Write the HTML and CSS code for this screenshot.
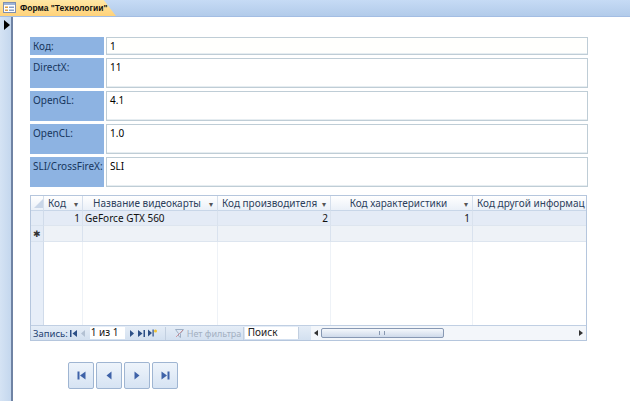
FILE: index.html
```html
<!DOCTYPE html>
<html lang="ru">
<head>
<meta charset="utf-8">
<title>Форма "Технологии"</title>
<link rel="stylesheet" href="styles.css">
</head>
<body>
<div class="tabbar">
  <div class="tab">
    <svg class="tab-icon" width="13" height="11" viewBox="0 0 13 11">
      <rect x="0.5" y="0.5" width="12" height="10" fill="#fff" stroke="#7f8fb0"/>
      <rect x="1" y="1" width="11" height="2" fill="#9db4d8"/>
      <rect x="2" y="4.5" width="3" height="1.5" fill="#e0a040"/>
      <rect x="6" y="4.5" width="5" height="1.5" fill="#8aa0c8"/>
      <rect x="2" y="7.5" width="3" height="1.5" fill="#e0a040"/>
      <rect x="6" y="7.5" width="5" height="1.5" fill="#8aa0c8"/>
    </svg>
    <span class="tab-title">Форма "Технологии"</span>
  </div>
</div>
<div class="main">
  <div class="selector-strip">
    <svg class="current-mark" width="6" height="10" viewBox="0 0 6 10"><path d="M0 0 L6 5 L0 10 Z" fill="#000"/></svg>
  </div>
  <div class="form-body">
    <div class="fields">
      <div class="label">Код:</div><div class="field field-key">1</div>
      <div class="label tall">DirectX:</div><div class="field tall">11</div>
      <div class="label tall">OpenGL:</div><div class="field tall">4.1</div>
      <div class="label tall">OpenCL:</div><div class="field tall">1.0</div>
      <div class="label tall">SLI/CrossFireX:</div><div class="field tall">SLI</div>
    </div>

    <div class="datasheet">
      <div class="grid">
        <div class="hcell corner"><svg width="9" height="9" viewBox="0 0 9 9"><path d="M9 0 L9 9 L0 9 Z" fill="#c9d6e8"/></svg></div>
        <div class="hcell"><span class="htext">Код</span><span class="drop">▾</span></div>
        <div class="hcell"><span class="htext center">Название видеокарты</span><span class="drop">▾</span></div>
        <div class="hcell"><span class="htext">Код производителя</span><span class="drop">▾</span></div>
        <div class="hcell"><span class="htext center">Код характеристики</span><span class="drop">▾</span></div>
        <div class="hcell last"><span class="htext">Код другой информац</span></div>

        <div class="sel"></div>
        <div class="cell num cur">1</div>
        <div class="cell cur">GeForce GTX 560</div>
        <div class="cell num cur">2</div>
        <div class="cell num cur">1</div>
        <div class="cell cur last"></div>

        <div class="sel star">✱</div>
        <div class="cell newrow"></div>
        <div class="cell newrow"></div>
        <div class="cell newrow"></div>
        <div class="cell newrow"></div>
        <div class="cell newrow last"></div>

        <div class="sel fill"></div>
        <div class="cell fill"></div>
        <div class="cell fill"></div>
        <div class="cell fill"></div>
        <div class="cell fill"></div>
        <div class="cell fill last"></div>
      </div>

      <div class="navbar">
        <span class="nav-label">Запись:</span>
        <svg class="nav-ic first" width="7" height="7" viewBox="0 0 7 7"><rect x="0" y="0" width="1.5" height="7" fill="#2c4f86"/><path d="M7 0 L2.5 3.5 L7 7 Z" fill="#2c4f86"/></svg>
        <svg class="nav-ic prev" width="4" height="7" viewBox="0 0 4 7"><path d="M4 0 L0 3.5 L4 7 Z" fill="#b3c1d3"/></svg>
        <span class="nav-box">1 из 1</span>
        <svg class="nav-ic next" width="4" height="7" viewBox="0 0 4 7"><path d="M0 0 L4 3.5 L0 7 Z" fill="#2c4f86"/></svg>
        <svg class="nav-ic last" width="7" height="7" viewBox="0 0 7 7"><path d="M0 0 L4.5 3.5 L0 7 Z" fill="#2c4f86"/><rect x="5.5" y="0" width="1.5" height="7" fill="#2c4f86"/></svg>
        <svg class="nav-ic new" width="9" height="8" viewBox="0 0 9 8"><path d="M0 0.5 L4 4 L0 7.5 Z" fill="#2c4f86"/><rect x="4.5" y="0.5" width="1.2" height="7" fill="#2c4f86"/><circle cx="7.5" cy="2" r="1.5" fill="#f2c230"/></svg>
        <span class="nav-sep"></span>
        <span class="nav-filter"><svg width="9" height="9" viewBox="0 0 9 9"><path d="M0.5 0.5 L8.5 0.5 L5.5 4.5 L5.5 8.5 L3.5 7 L3.5 4.5 Z" fill="none" stroke="#9fb0c6"/><path d="M1 8 L8 1" stroke="#c55" stroke-width="1" opacity="0.5"/></svg>Нет фильтра</span>
        <span class="nav-sep"></span>
        <span class="nav-search">Поиск</span>
        <div class="hscroll">
          <span class="sarrow"><svg width="4" height="6" viewBox="0 0 4 6"><path d="M4 0 L0 3 L4 6 Z" fill="#333"/></svg></span>
          <span class="thumb"><span class="grip"></span></span>
          <span class="track"></span>
          <span class="sarrow"><svg width="4" height="6" viewBox="0 0 4 6"><path d="M0 0 L4 3 L0 6 Z" fill="#333"/></svg></span>
        </div>
      </div>
    </div>

    <div class="buttons">
      <button class="nbtn" title="Первая запись"><svg width="9" height="9" viewBox="0 0 9 9"><rect x="0.5" y="0.5" width="2" height="8" fill="#3e62a8"/><path d="M8.5 0.5 L3 4.5 L8.5 8.5 Z" fill="#3e62a8"/></svg></button>
      <button class="nbtn" title="Предыдущая запись"><svg width="6" height="9" viewBox="0 0 6 9"><path d="M5.5 0.5 L0.5 4.5 L5.5 8.5 Z" fill="#3e62a8"/></svg></button>
      <button class="nbtn" title="Следующая запись"><svg width="6" height="9" viewBox="0 0 6 9"><path d="M0.5 0.5 L5.5 4.5 L0.5 8.5 Z" fill="#3e62a8"/></svg></button>
      <button class="nbtn" title="Последняя запись"><svg width="9" height="9" viewBox="0 0 9 9"><path d="M0.5 0.5 L6 4.5 L0.5 8.5 Z" fill="#3e62a8"/><rect x="6.5" y="0.5" width="2" height="8" fill="#3e62a8"/></svg></button>
    </div>
  </div>
</div>
</body>
</html>
```

FILE: styles.css
```css
* { box-sizing: border-box; }
html, body {
  margin: 0;
  padding: 0;
  width: 630px;
  height: 401px;
  overflow: hidden;
  background: #fff;
  font-family: "Noto Sans", "Open Sans", sans-serif;
  font-size: 10px;
  color: #000;
}

.tabbar {
  height: 17px;
  background: linear-gradient(#c6dbf5, #b2cbea);
  border-bottom: 1px solid #a3bde3;
  display: flex;
  align-items: flex-end;
}
.tab {
  height: 17px;
  width: 116px;
  display: flex;
  align-items: center;
  gap: 4px;
  padding-left: 3px;
  background: linear-gradient(#ffe9a8, #ffd27a);
  clip-path: polygon(0 0, 103px 0, 116px 17px, 0 17px);
}
.tab-title {
  font-family: "Liberation Sans", Arial, sans-serif;
  font-weight: bold;
  font-size: 8.5px;
  white-space: nowrap;
  color: #111;
}
.tab-icon { flex: none; }

.main {
  display: flex;
  height: 384px;
}
.selector-strip {
  width: 13px;
  flex: none;
  background: linear-gradient(90deg, #d5e3f4, #c4d7ee);
  border-right: 2px solid #6f83a4;
  padding: 3px 0 0 4px;
}
.current-mark { display: block; }

.form-body {
  flex: 1;
  padding: 20px 0 0 17px;
}

.fields {
  display: grid;
  grid-template-columns: 74px 482px;
  grid-template-rows: 18px 30px 30px 30px 30px;
  column-gap: 2px;
  row-gap: 3px;
  width: 558px;
}
.label {
  background: #8db3e2;
  color: #17365d;
  padding: 2px 0 0 3px;
  white-space: nowrap;
}
.field {
  border: 1px solid #bfcdd6;
  box-shadow: inset 0 -1px 0 #e6edf1;
  background: #fff;
  padding: 1px 0 0 3px;
}
.field-key { background: #fffffd; }

.datasheet {
  margin-top: 8px;
  width: 557px;
  height: 146px;
  border: 1px solid #b5c6dd;
  display: flex;
  flex-direction: column;
}
.grid {
  flex: 1;
  display: grid;
  grid-template-columns: 13px 39px 135px 113px 142px 1fr;
  grid-template-rows: 15px 15px 16px 1fr;
  overflow: hidden;
}
.hcell {
  background: linear-gradient(#ffffff, #eaf0f8);
  border-right: 1px solid #d5dfec;
  border-bottom: 1px solid #c8d6e8;
  display: flex;
  align-items: center;
  padding: 0 4px;
  color: #2d3f5c;
  white-space: nowrap;
  overflow: hidden;
}
.hcell.corner { padding: 0 0 0 3px; }
.hcell.last { border-right: 0; }
.htext { flex: 1; }
.htext.center { text-align: center; }
.drop { font-size: 8px; color: #555; margin-left: 2px; }

.sel {
  background: #e3ebf6;
  border-right: 1px solid #d0dbea;
  border-bottom: 1px solid #d8e2ee;
}
.sel.star {
  font-size: 9px;
  color: #333;
  display: flex;
  align-items: center;
  justify-content: center;
}
.sel.fill { background: #e7eef8; border-bottom: 0; }
.cell {
  border-right: 1px solid #d9e2ee;
  border-bottom: 1px solid #dde5ef;
  padding: 0 2px;
  white-space: nowrap;
  overflow: hidden;
  line-height: 14px;
  color: #111;
}
.cell.last { border-right: 0; }
.cell.num { text-align: right; }
.cell.cur { background: #e4ebf6; }
.cell.newrow { background: #eef2f7; }
.cell.fill {
  background: #fff;
  border-right-color: #eef2f7;
  border-bottom: 0;
}

.navbar {
  height: 15px;
  flex: none;
  background: linear-gradient(#e5edf7, #d3e0f0);
  border-top: 1px solid #c0cfe3;
  display: flex;
  align-items: center;
  padding-left: 2px;
  white-space: nowrap;
}
.nav-label { color: #1f3f72; flex: none; margin-right: 2px; font-size: 9.5px; }
.nav-ic { flex: none; }
.nav-ic.prev { margin-left: 4px; }
.nav-box {
  background: #fff;
  height: 12px;
  width: 35px;
  line-height: 11px;
  padding-left: 1px;
  margin-left: 5px;
  color: #111;
  flex: none;
}
.nav-ic.next { margin-left: 5px; }
.nav-ic.last { margin-left: 4px; }
.nav-ic.new { margin-left: 3px; }
.nav-sep { width: 1px; height: 13px; background: #c2cfe0; margin-left: 8px; flex: none; }
.nav-filter {
  color: #a3b0c2;
  display: flex;
  align-items: center;
  gap: 3px;
  width: 68px;
  margin-left: 9px;
  font-size: 9px;
  flex: none;
  overflow: hidden;
}
.nav-filter + .nav-sep { margin-left: 0; }
.nav-search {
  background: #fff;
  width: 54px;
  height: 12px;
  line-height: 11px;
  padding-left: 3px;
  margin-left: 1px;
  color: #222;
  border-right: 1px solid #c2cfe0;
  flex: none;
}
.hscroll {
  margin-left: 12px;
  flex: 1;
  height: 14px;
  display: flex;
  align-items: center;
  background: #f3f6fa;
}
.sarrow {
  width: 10px;
  display: flex;
  justify-content: center;
  flex: none;
}
.thumb {
  width: 123px;
  height: 10px;
  border: 1px solid #8798b3;
  border-radius: 2px;
  background: linear-gradient(#f5f8fc, #cfdaea);
  display: flex;
  justify-content: center;
  align-items: center;
  flex: none;
}
.grip { width: 6px; height: 4px; border-left: 1px solid #8898b0; border-right: 1px solid #8898b0; }
.track { flex: 1; }

.buttons {
  display: flex;
  gap: 2px;
  margin: 21px 0 0 38px;
}
.nbtn {
  width: 26px;
  height: 27px;
  padding: 0;
  border: 1px solid #9fb5d2;
  border-radius: 2px;
  background: linear-gradient(#eef4fb, #d6e3f3);
  display: flex;
  align-items: center;
  justify-content: center;
}
```
